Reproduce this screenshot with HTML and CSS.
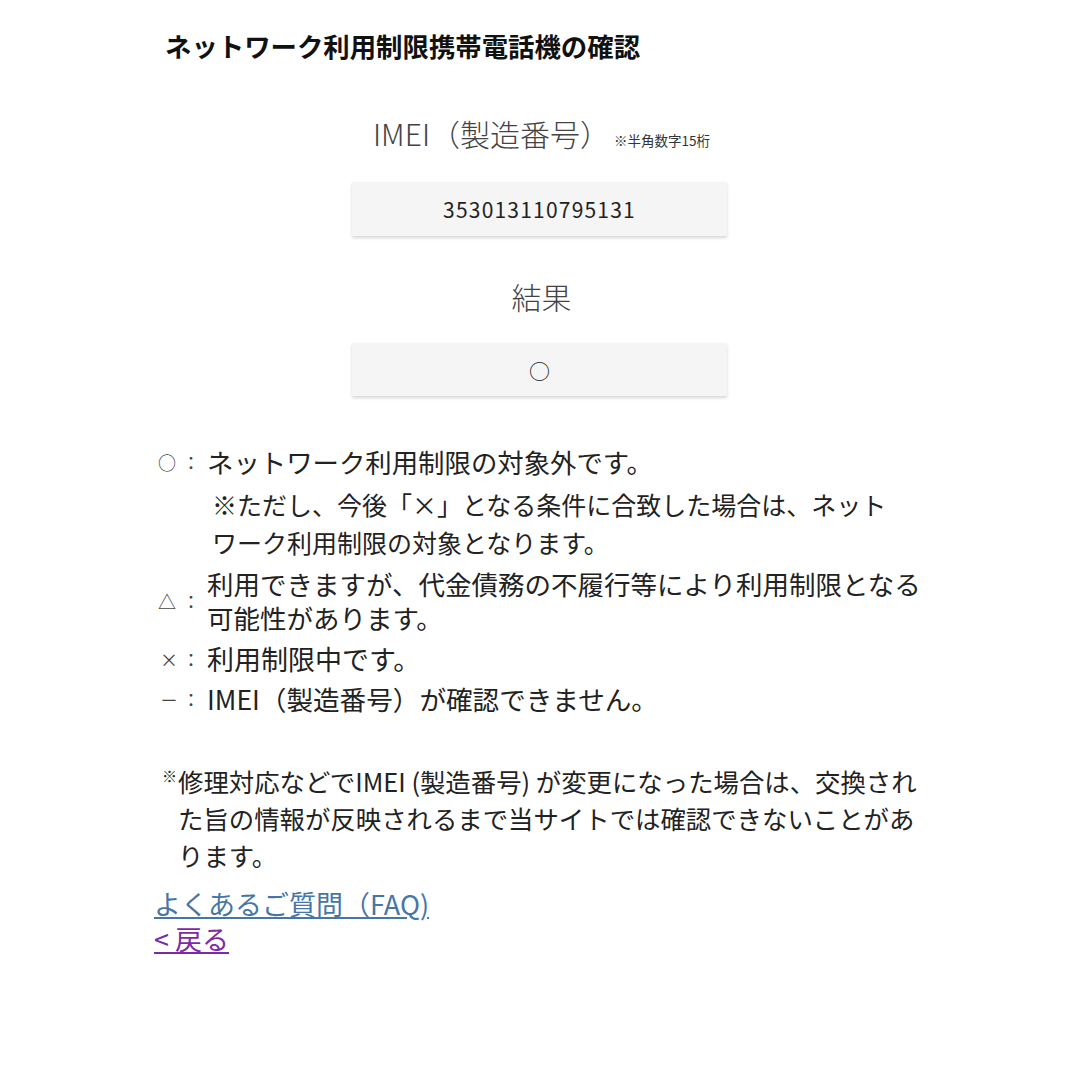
FILE: index.html
```html
<!DOCTYPE html>
<html lang="ja">
<head>
<meta charset="utf-8">
<title>ネットワーク利用制限携帯電話機の確認</title>
<link rel="stylesheet" href="styles.css">
</head>
<body>
<div class="page">
  <h1 class="title">ネットワーク利用制限携帯電話機の確認</h1>

  <div class="field-head">
    <span class="label">IMEI（製造番号）</span><span class="hint">※半角数字15桁</span>
  </div>
  <div class="box box-imei">353013110795131</div>

  <div class="field-head field-head-result">
    <span class="label">結果</span>
  </div>
  <div class="box box-result">○</div>

  <div class="legend">
    <div class="row row-ok">
      <span class="mark"><span class="sym">○</span><span class="colon">：</span></span>
      <span class="desc">ネットワーク利用制限の対象外です。</span>
    </div>
    <div class="sub">※ただし、今後「×」となる条件に合致した場合は、ネット<br>ワーク利用制限の対象となります。</div>
    <div class="row row-tri">
      <span class="mark"><span class="sym">△</span><span class="colon">：</span></span>
      <span class="desc">利用できますが、代金債務の不履行等により利用制限となる<br>可能性があります。</span>
    </div>
    <div class="row row-single row-x">
      <span class="mark"><span class="sym sym-x">×</span><span class="colon">：</span></span>
      <span class="desc">利用制限中です。</span>
    </div>
    <div class="row row-single row-dash">
      <span class="mark"><span class="sym sym-x">－</span><span class="colon">：</span></span>
      <span class="desc">IMEI（製造番号）が確認できません。</span>
    </div>
  </div>

  <p class="note"><sup class="kome">※</sup>修理対応などでIMEI (製造番号) が変更になった場合は、交換され<br>た旨の情報が反映されるまで当サイトでは確認できないことがあ<br>ります。</p>

  <div class="links">
    <a class="link link-faq" href="#faq">よくあるご質問（FAQ)</a>
    <a class="link link-back" href="#back">&lt; 戻る</a>
  </div>
</div>
</body>
</html>
```

FILE: styles.css
```css
html, body {
  margin: 0;
  padding: 0;
  background: #ffffff;
}

body {
  font-family: "Noto Sans CJK JP", "Noto Sans", sans-serif;
  color: #222222;
}

.page {
  width: 775px;
  padding: 28px 0 0 154px;
}

.title {
  margin: 0;
  padding-left: 11px;
  font-size: 26.4px;
  line-height: 36px;
  font-weight: 700;
  color: #111111;
}

.field-head {
  width: 775px;
  margin-left: -154px;
  padding-left: 154px;
  display: flex;
  justify-content: center;
  align-items: baseline;
  margin-top: 49px;
  line-height: 40px;
}

.field-head-result {
  margin-top: 40px;
}

.label {
  font-size: 30px;
  font-weight: 300;
  color: #444444;
}

.hint {
  font-size: 13.5px;
  color: #333333;
  margin-left: 4px;
}

.box {
  width: 375px;
  height: 54px;
  margin-left: 198px;
  margin-top: 22px;
  background: #f5f5f5;
  box-shadow: 0 2px 3px rgba(0, 0, 0, 0.16);
  display: flex;
  align-items: center;
  justify-content: center;
  color: #222222;
}

.box-imei {
  font-size: 21px;
  letter-spacing: 1.2px;
}

.box-result {
  font-size: 21px;
  height: 53px;
  margin-top: 27px;
}

.legend {
  margin-top: 47px;
}

.row {
  display: flex;
  align-items: center;
}

.mark {
  width: 53px;
  flex: none;
  display: flex;
  align-items: center;
  font-size: 18px;
  color: #444444;
}

.sym {
  width: 24px;
  padding-left: 4px;
}

.sym-x {
  width: 22px;
  padding-left: 6px;
}

.colon {
  width: 18px;
}

.desc {
  font-size: 26px;
  color: #222222;
  white-space: nowrap;
}

.row-ok .desc {
  font-size: 26.4px;
  line-height: 38px;
}

.sub {
  margin-top: 4px;
  padding-left: 58px;
  font-size: 25px;
  line-height: 38px;
  white-space: nowrap;
}

.row-tri {
  margin-top: 6px;
}

.row-tri .desc {
  font-size: 26.5px;
  line-height: 34px;
}

.row-single .desc {
  line-height: 40px;
}

.row-x {
  margin-top: 4px;
}

.row-x .desc {
  font-size: 27px;
}

.row-dash .desc {
  font-size: 26.6px;
}

.note {
  margin: 44px 0 0 0;
  padding-left: 24px;
  font-size: 25.4px;
  line-height: 37px;
  white-space: nowrap;
  color: #222222;
}

.kome {
  font-size: 15px;
  line-height: 0;
  vertical-align: 10px;
  margin-left: -16px;
  margin-right: 1px;
}

.links {
  margin-top: 12px;
  display: flex;
  flex-direction: column;
  align-items: flex-start;
}

.link {
  font-size: 27px;
  line-height: 35px;
}

.link-faq {
  color: #4676a6;
}

.link-back {
  color: #7d2aa6;
}
```
